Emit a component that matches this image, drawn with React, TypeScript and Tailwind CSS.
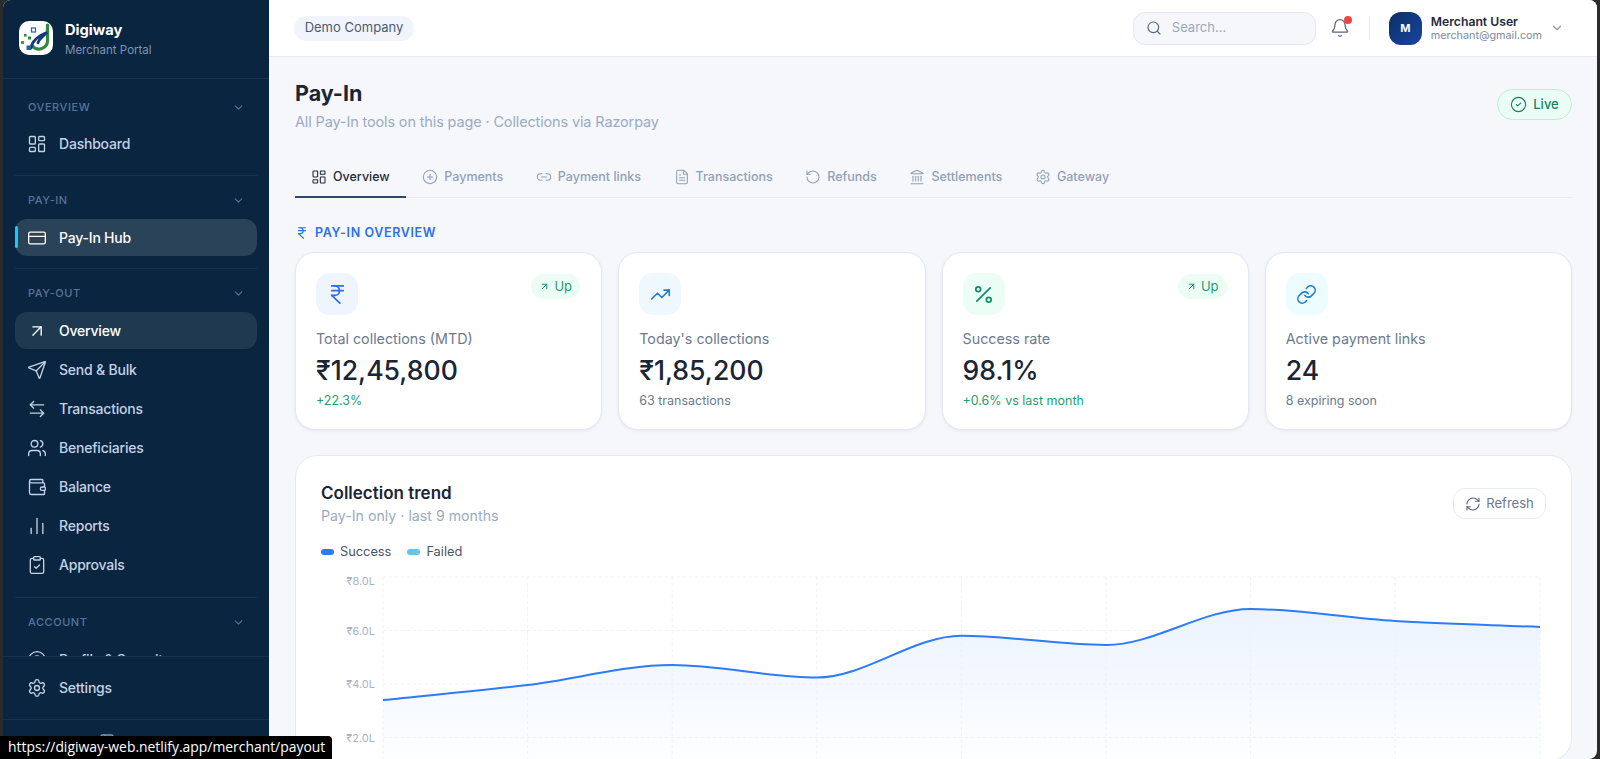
import {
  ArrowLeftRight,
  ArrowUpRight,
  Bell,
  ChartNoAxesColumn,
  ChevronDown,
  CircleCheck,
  CirclePlus,
  CircleUser,
  ClipboardCheck,
  CreditCard,
  FileText,
  IndianRupee,
  Landmark,
  LayoutDashboard,
  Link,
  Link2,
  PanelLeft,
  Percent,
  RefreshCw,
  RotateCcw,
  Search,
  Send,
  Settings,
  TrendingUp,
  Users,
  Wallet,
} from 'lucide-react'

const payoutItems = [
  { icon: Send, label: 'Send & Bulk' },
  { icon: ArrowLeftRight, label: 'Transactions' },
  { icon: Users, label: 'Beneficiaries' },
  { icon: Wallet, label: 'Balance' },
  { icon: ChartNoAxesColumn, label: 'Reports' },
  { icon: ClipboardCheck, label: 'Approvals' },
]

const tabs = [
  { icon: LayoutDashboard, label: 'Overview', active: true },
  { icon: CirclePlus, label: 'Payments' },
  { icon: Link2, label: 'Payment links' },
  { icon: FileText, label: 'Transactions' },
  { icon: RotateCcw, label: 'Refunds' },
  { icon: Landmark, label: 'Settlements' },
  { icon: Settings, label: 'Gateway' },
]

const stats = [
  {
    icon: IndianRupee,
    tile: 'bg-[#eef5ff]',
    iconClass: 'h-[23px] w-[23px] text-[#2b6ff0]',
    label: 'Total collections (MTD)',
    value: '₹12,45,800',
    note: '+22.3%',
    noteColor: 'text-[#1f9d6e]',
    up: true,
  },
  {
    icon: TrendingUp,
    tile: 'bg-[#f0f8ff]',
    iconClass: 'h-[21px] w-[21px] text-[#1f7fc4]',
    label: "Today's collections",
    value: '₹1,85,200',
    note: '63 transactions',
    noteColor: 'text-[#6b7a90]',
  },
  {
    icon: Percent,
    tile: 'bg-[#ecfdf5]',
    iconClass: 'h-[23px] w-[23px] text-[#10906a]',
    label: 'Success rate',
    value: '98.1%',
    note: '+0.6% vs last month',
    noteColor: 'text-[#1f9d6e]',
    up: true,
  },
  {
    icon: Link,
    tile: 'bg-[#ecfcff]',
    iconClass: 'h-[21px] w-[21px] text-[#1f7fc4]',
    label: 'Active payment links',
    value: '24',
    note: '8 expiring soon',
    noteColor: 'text-[#6b7a90]',
  },
]

// chart coordinates are relative to the svg, which starts at x=321 y=570
const gridX = [62, 206.6, 351.2, 495.8, 640.4, 785, 929.6, 1074.2, 1219]
const gridY = [7, 60.5, 114, 167.5]
const yLabels = ['₹8.0L', '₹6.0L', '₹4.0L', '₹2.0L']
const curveY = [130, 115, 95, 107.5, 65.7, 75, 39, 51, 57]

// monotone cubic through the points, same as a recharts "monotone" line
function monotonePath(xs: number[], ys: number[]) {
  const n = xs.length
  const slopes = xs.slice(0, -1).map((x, i) => (ys[i + 1] - ys[i]) / (xs[i + 1] - x))
  const t = xs.map((_, i) => {
    if (i === 0) return slopes[0]
    if (i === n - 1) return slopes[n - 2]
    if (slopes[i - 1] * slopes[i] <= 0) return 0
    return (2 * slopes[i - 1] * slopes[i]) / (slopes[i - 1] + slopes[i])
  })
  let d = `M${xs[0]},${ys[0]}`
  for (let i = 0; i < n - 1; i++) {
    const h = (xs[i + 1] - xs[i]) / 3
    d += `C${xs[i] + h},${ys[i] + t[i] * h} ${xs[i + 1] - h},${ys[i + 1] - t[i + 1] * h} ${xs[i + 1]},${ys[i + 1]}`
  }
  return d
}

function Logo() {
  return (
    <div className="flex h-[34px] w-[34px] shrink-0 items-center justify-center overflow-hidden rounded-[10px] bg-white">
      <svg viewBox="0 0 34 34" className="h-[34px] w-[34px]">
        <path d="M28.5 4v15.5a8.5 8.5 0 0 1-15 5.5" fill="none" stroke="#2f8a3e" strokeWidth="3.2" strokeLinecap="round" />
        <path d="M12 27c1-7 7-12 16-15.5-4 4-8 6-9 10.5" fill="none" stroke="#123a7a" strokeWidth="2.8" strokeLinecap="round" />
        <rect x="12.5" y="7" width="4" height="4" fill="none" stroke="#2a5ea8" strokeWidth="1.2" />
        <rect x="9" y="15.5" width="3" height="3" fill="#2f8a3e" />
        <rect x="5" y="13" width="2.6" height="2.6" fill="#2f8a3e" />
        <rect x="2" y="20" width="3" height="3" fill="#3d9a4a" />
        <rect x="7.5" y="24.5" width="4.5" height="4.5" fill="#2a5ea8" />
      </svg>
    </div>
  )
}

function NavItem({ icon: Icon, label, state }: { icon: typeof Send; label: string; state?: 'hub' | 'current' }) {
  return (
    <div
      className={
        'relative flex h-[37px] shrink-0 items-center gap-[12px] rounded-[12px] pl-[12px] text-[14px] font-medium tracking-[-0.015em] ' +
        (state === 'hub'
          ? 'bg-[#2a4359] text-white'
          : state === 'current'
            ? 'bg-[#1f3a50] text-white'
            : 'text-[#c3d2e4]')
      }
    >
      {state === 'hub' && <span className="absolute top-[7px] left-0 h-[22px] w-[3px] rounded-full bg-[#1fc8f2]" />}
      <Icon className="h-[20px] w-[20px]" strokeWidth={1.6} />
      <span>{label}</span>
    </div>
  )
}

function NavSection({
  title,
  first,
  pad = 'pb-[12px]',
  children,
}: {
  title: string
  first?: boolean
  pad?: string
  children: React.ReactNode
}) {
  return (
    <div className={'mx-[12px] ' + (first ? '' : 'border-t border-[#16344f] ') + pad}>
      <div className={'flex items-center justify-between pr-[12px] pl-[13px] ' + (first ? 'h-[46px] pt-[10px]' : 'h-[43px] pt-[6px]')}>
        <span className="text-[11px] font-medium tracking-[0.05em] text-[#56749a]">{title}</span>
        <ChevronDown className="h-[13px] w-[13px] text-[#56749a]" />
      </div>
      <div className="flex flex-col gap-[2px]">{children}</div>
    </div>
  )
}

function Sidebar() {
  return (
    <aside className="flex h-full w-[266px] shrink-0 flex-col bg-[#0a2540]">
      <div className="flex h-[79px] shrink-0 items-start gap-[12px] border-b border-[#16344f] pt-[21px] pl-[16px]">
        <Logo />
        <div className="leading-none">
          <div className="pt-[2px] text-[14.7px] leading-[14px] font-bold text-white">Digiway</div>
          <div className="mt-[6px] text-[11.5px] leading-[14px] text-[#7f95b2]">Merchant Portal</div>
        </div>
      </div>
      <nav className="min-h-0 flex-1 overflow-hidden">
        <NavSection title="OVERVIEW" first pad="pb-[13px]">
          <NavItem icon={LayoutDashboard} label="Dashboard" />
        </NavSection>
        <NavSection title="PAY-IN">
          <NavItem icon={CreditCard} label="Pay-In Hub" state="hub" />
        </NavSection>
        <NavSection title="PAY-OUT" pad="pb-[14px]">
          <NavItem icon={ArrowUpRight} label="Overview" state="current" />
          {payoutItems.map((item) => (
            <NavItem key={item.label} icon={item.icon} label={item.label} />
          ))}
        </NavSection>
        <NavSection title="ACCOUNT">
          <NavItem icon={CircleUser} label="Profile & Security" />
        </NavSection>
      </nav>
      <div className="shrink-0 border-t border-[#16344f] px-[12px] pt-[12px] pb-[13px]">
        <NavItem icon={Settings} label="Settings" />
      </div>
      <div className="flex h-[40px] shrink-0 items-start justify-center gap-2 border-t border-[#16344f] pt-[13px] text-[12px] text-[#7f95b2]">
        <PanelLeft className="h-[16px] w-[16px]" />
        <span>Collapse</span>
      </div>
    </aside>
  )
}

function Header() {
  return (
    <header className="flex h-[57px] shrink-0 items-center border-b border-[#e6ebf3] bg-white pr-[33px] pl-[25px]">
      <div className="flex h-[25px] w-[120px] items-center justify-center rounded-full bg-[#f1f4fa] text-[13px] text-[#4b5b73]">
        Demo Company
      </div>
      <div className="ml-auto flex h-[33px] w-[183px] items-center gap-[10px] rounded-[12px] border border-[#e2e8f2] bg-[#f5f7fb] pl-[12px] text-[13px] text-[#9aa8bd]">
        <Search className="h-[16px] w-[16px] text-[#56657c]" strokeWidth={1.75} />
        <span>Search...</span>
      </div>
      <div className="relative ml-[14px] flex h-[34px] w-[20px] items-center justify-center">
        <Bell className="h-[20px] w-[20px] text-[#56657c]" strokeWidth={1.5} />
        <span className="absolute top-[5px] right-[-2px] h-[8px] w-[8px] rounded-full bg-[#ef4444]" />
      </div>
      <div className="mx-[19px] h-[24px] w-px bg-[#e6ebf3]" />
      <div className="flex h-[33px] w-[33px] items-center justify-center rounded-[12px] bg-gradient-to-br from-[#0d2f64] to-[#1746a2] text-[11px] font-bold text-white">
        M
      </div>
      <div className="ml-[9px] leading-none">
        <div className="text-[12.2px] leading-[15px] font-semibold text-[#1e293b]">Merchant User</div>
        <div className="text-[10.8px] leading-[14px] text-[#7b8aa0]">merchant@gmail.com</div>
      </div>
      <ChevronDown className="ml-[8px] h-[14px] w-[14px] text-[#8a98ad]" />
    </header>
  )
}

function PageTitle() {
  return (
    <div className="flex items-start justify-between">
      <div>
        <h1 className="text-[21.5px] leading-[30px] font-bold text-[#1a2536]">Pay-In</h1>
        <p className="mt-[3px] text-[14.5px] leading-[22px] tracking-[-0.01em] text-[#9aabc3]">
          All Pay-In tools on this page · Collections via Razorpay
        </p>
      </div>
      <div className="mt-[11px] flex h-[31px] w-[75px] items-center justify-center gap-[6px] rounded-full border border-[#bbf0d4] bg-[#ecfdf5] text-[13px] font-medium text-[#17815f]">
        <CircleCheck className="h-[17px] w-[17px]" strokeWidth={1.6} />
        Live
      </div>
    </div>
  )
}

function Tabs() {
  return (
    <div className="mt-[22px] flex h-[43px] border-b border-[#e6ebf3]">
      {tabs.map((tab) => (
        <div
          key={tab.label}
          className={
            'mb-[-1px] flex items-center gap-[6px] border-b-2 pt-[3px] pr-[16.6px] pl-[16px] text-[12.5px] font-medium ' +
            (tab.active ? 'border-[#2d4a6e] text-[#1e293b]' : 'border-transparent text-[#8fa1ba]')
          }
        >
          <tab.icon className="h-[16px] w-[16px]" strokeWidth={1.6} />
          {tab.label}
        </div>
      ))}
    </div>
  )
}

function StatCard({ stat }: { stat: (typeof stats)[number] }) {
  return (
    <div className="h-[178px] rounded-[20px] border border-[#e3e8f1] bg-white px-[20px] pt-[20px] shadow-[0_1px_3px_rgba(30,50,90,0.08)]">
      <div className="flex items-start justify-between">
        <div className={'flex h-[42px] w-[42px] items-center justify-center rounded-[14px] ' + stat.tile}>
          <stat.icon className={stat.iconClass} strokeWidth={1.8} />
        </div>
        {stat.up && (
          <div className="mt-[1px] mr-[1px] flex h-[25px] w-[49px] items-center justify-center gap-[4px] rounded-full bg-[#ecfdf5] text-[13px] text-[#1f9d6e]">
            <ArrowUpRight className="h-[11px] w-[11px] text-[#10806a]" strokeWidth={2} />
            Up
          </div>
        )}
      </div>
      <div className="mt-[14px] text-[14.3px] leading-[20px] text-[#6b7a90]">{stat.label}</div>
      <div className="mt-[4px] text-[26.6px] leading-[34px] font-medium text-[#1a2536]">{stat.value}</div>
      <div className={'mt-[5px] text-[12.5px] leading-[18px] ' + stat.noteColor}>{stat.note}</div>
    </div>
  )
}

function TrendChart() {
  const line = monotonePath(gridX, curveY)
  return (
    <svg className="mt-[8px] block h-[190px] w-[1225px]" viewBox="0 0 1225 190" fill="none">
      <defs>
        <linearGradient id="trendFill" x1="0" y1="0" x2="0" y2="1">
          <stop offset="0%" stopColor="#2b7cf6" stopOpacity="0.09" />
          <stop offset="100%" stopColor="#2b7cf6" stopOpacity="0.01" />
        </linearGradient>
      </defs>
      <path d={`${line}L1219,190L62,190Z`} fill="url(#trendFill)" />
      {gridY.map((y) => (
        <line key={y} x1="62" x2="1219" y1={y} y2={y} stroke="#eef1f6" strokeDasharray="3 3" />
      ))}
      {gridX.map((x) => (
        <line key={x} x1={x} x2={x} y1="7" y2="190" stroke="#eef1f6" strokeDasharray="3 3" />
      ))}
      {yLabels.map((label, i) => (
        <text key={label} x="54" y={gridY[i] + (i === 0 ? 7.5 : 4)} textAnchor="end" fontSize="11" fill="#a9b4c4">
          {label}
        </text>
      ))}
      <path d={line} stroke="#2b7cf6" strokeWidth="2" />
    </svg>
  )
}

function TrendCard() {
  return (
    <div className="mt-[25px] rounded-[22px] border border-[#e3e8f1] bg-white pt-[24px] pr-[25px] pl-[25px]">
      <div className="flex items-start justify-between">
        <div>
          <div className="text-[17px] leading-[26px] font-semibold text-[#1a2536]">Collection trend</div>
          <div className="text-[14.2px] leading-[20px] text-[#9aabc3]">Pay-In only · last 9 months</div>
        </div>
        <div className="mt-[8px] flex h-[31px] w-[93px] items-center justify-center gap-[5px] rounded-[12px] border border-[#e6ebf3] text-[13px] text-[#6b7a90]">
          <RefreshCw className="h-[16px] w-[16px] text-[#56657c]" strokeWidth={1.6} />
          Refresh
        </div>
      </div>
      <div className="mt-[16px] flex items-center text-[12.8px] leading-[20px] text-[#475569]">
        <span className="h-[6px] w-[13px] rounded-full bg-[#2b7cf6]" />
        <span className="ml-[6px]">Success</span>
        <span className="ml-[16px] h-[6px] w-[13px] rounded-full bg-[#63c5ea]" />
        <span className="ml-[6px]">Failed</span>
      </div>
      <TrendChart />
    </div>
  )
}

export default function App() {
  return (
    <div className="relative h-[759px] w-[1600px] overflow-hidden bg-[#2b2b2b] px-[3px] font-['Inter',sans-serif]">
      <div className="flex h-full overflow-hidden rounded-[8px] bg-[#f5f7fb]">
        <Sidebar />
        <main className="flex min-w-0 flex-1 flex-col">
          <Header />
          <div className="min-h-0 flex-1 overflow-hidden pt-[21px] pr-[25px] pl-[26px]">
            <PageTitle />
            <Tabs />
            <div className="mt-[27px] flex h-[16px] items-center gap-[6px] text-[12.5px] font-semibold tracking-[0.05em] text-[#2b6ff0]">
              <IndianRupee className="h-[14px] w-[14px]" strokeWidth={2} />
              PAY-IN OVERVIEW
            </div>
            <div className="mt-[11px] grid grid-cols-4 gap-4">
              {stats.map((stat) => (
                <StatCard key={stat.label} stat={stat} />
              ))}
            </div>
            <TrendCard />
          </div>
        </main>
      </div>
      {/* browser link preview bubble */}
      <div className="absolute bottom-0 left-0 flex h-[23px] w-[332px] items-center rounded-tr-[4px] bg-black pl-[8px] font-['Open_Sans',sans-serif] text-[13.9px] whitespace-nowrap text-white">
        https://digiway-web.netlify.app/merchant/payout
      </div>
    </div>
  )
}
